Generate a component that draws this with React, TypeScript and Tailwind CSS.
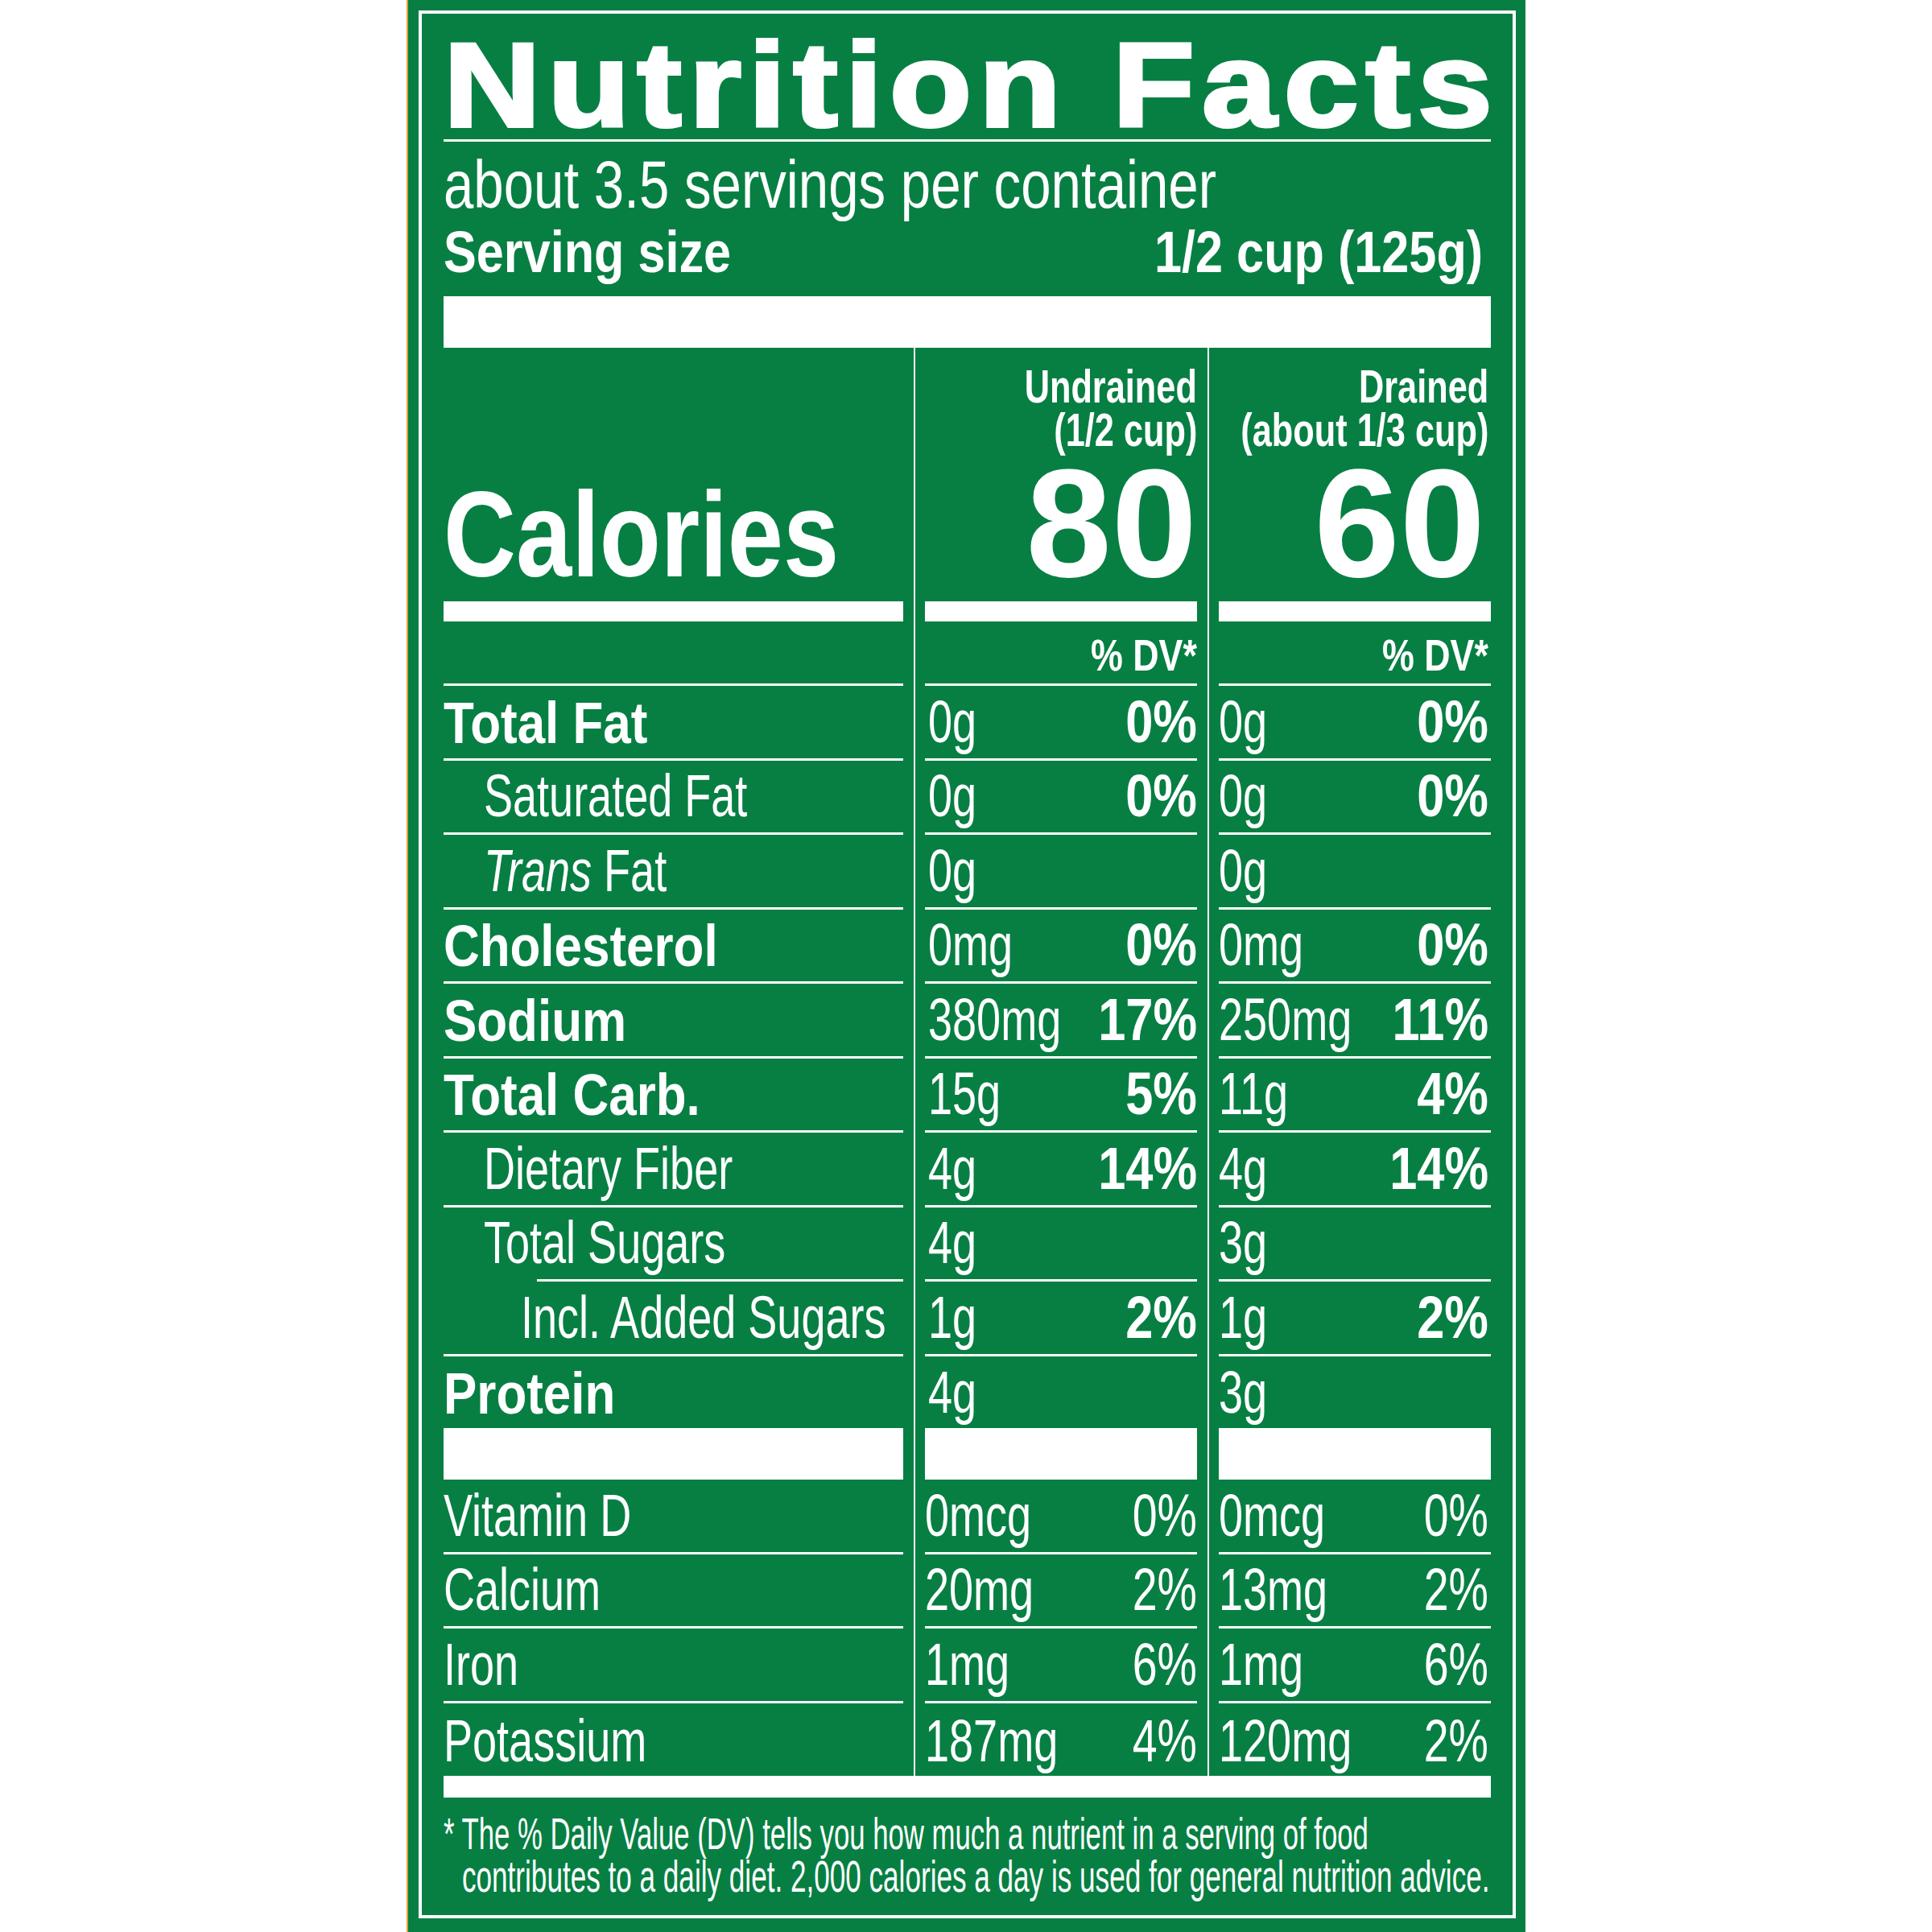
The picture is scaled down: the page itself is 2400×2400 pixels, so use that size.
import React from 'react';

/* ------------------------------------------------------------------ */
/*  Data                                                               */
/* ------------------------------------------------------------------ */

// Only Liberation Sans is around, so the condensed label face is faked with scale-x.
const SANS = "font-['Liberation_Sans',Arial,sans-serif]";

type Rule = 'full' | 'indent' | 'none';

type Row = {
  label: React.ReactNode;
  bold?: boolean;
  indent?: 0 | 1 | 2;
  u: string[];
  d: string[];
  rule: Rule;
  h: string;
  pb: string;
};

const NUTRIENTS: Row[] = [
  { label: 'Total Fat', bold: true, u: ['0g', '0%'], d: ['0g', '0%'], rule: 'full', h: 'h-[92.5px]', pb: 'pb-[8px]' },
  { label: 'Saturated Fat', indent: 1, u: ['0g', '0%'], d: ['0g', '0%'], rule: 'full', h: 'h-[92.5px]', pb: 'pb-[8px]' },
  {
    label: (
      <>
        <i>Trans</i> Fat
      </>
    ),
    indent: 1,
    u: ['0g'],
    d: ['0g'],
    rule: 'full',
    h: 'h-[92.5px]',
    pb: 'pb-[8px]',
  },
  { label: 'Cholesterol', bold: true, u: ['0mg', '0%'], d: ['0mg', '0%'], rule: 'full', h: 'h-[92.5px]', pb: 'pb-[8px]' },
  { label: 'Sodium', bold: true, u: ['380mg', '17%'], d: ['250mg', '11%'], rule: 'full', h: 'h-[92.5px]', pb: 'pb-[8px]' },
  { label: 'Total Carb.', bold: true, u: ['15g', '5%'], d: ['11g', '4%'], rule: 'full', h: 'h-[92.5px]', pb: 'pb-[8px]' },
  { label: 'Dietary Fiber', indent: 1, u: ['4g', '14%'], d: ['4g', '14%'], rule: 'full', h: 'h-[92.5px]', pb: 'pb-[8px]' },
  { label: 'Total Sugars', indent: 1, u: ['4g'], d: ['3g'], rule: 'indent', h: 'h-[92.5px]', pb: 'pb-[8px]' },
  { label: 'Incl. Added Sugars', indent: 2, u: ['1g', '2%'], d: ['1g', '2%'], rule: 'full', h: 'h-[92.5px]', pb: 'pb-[8px]' },
  { label: 'Protein', bold: true, u: ['4g'], d: ['3g'], rule: 'none', h: 'h-[89.5px]', pb: 'pb-[7px]' },
];

const VITAMINS: Row[] = [
  { label: 'Vitamin D', u: ['0mcg', '0%'], d: ['0mcg', '0%'], rule: 'full', h: 'h-[92.5px]', pb: 'pb-[8px]' },
  { label: 'Calcium', u: ['20mg', '2%'], d: ['13mg', '2%'], rule: 'full', h: 'h-[92.5px]', pb: 'pb-[8px]' },
  { label: 'Iron', u: ['1mg', '6%'], d: ['1mg', '6%'], rule: 'full', h: 'h-[92.5px]', pb: 'pb-[8px]' },
  { label: 'Potassium', u: ['187mg', '4%'], d: ['120mg', '2%'], rule: 'none', h: 'h-[90.5px]', pb: 'pb-[6px]' },
];

const INDENT = ['pl-0', 'pl-[50px]', 'pl-[96px]'];

const BOLD_TXT = 'text-[72px] leading-[72px] font-bold scale-x-[0.86]';
const REG_TXT = 'text-[74px] leading-[74px] scale-x-[0.73]';
const PCT_BOLD = 'text-[74px] leading-[74px] font-bold scale-x-[0.83]';
const PCT_REG = 'text-[74px] leading-[74px] scale-x-[0.75]';

/* ------------------------------------------------------------------ */
/*  Bits                                                               */
/* ------------------------------------------------------------------ */

// condensed text run: squeezed from its left or right edge
function T({
  children,
  right = false,
  className = '',
}: {
  children: React.ReactNode;
  right?: boolean;
  className?: string;
}) {
  return (
    <span className={`inline-block whitespace-nowrap ${right ? 'origin-right' : 'origin-left'} ${className}`}>
      {children}
    </span>
  );
}

function Cell({
  h,
  rule,
  pb,
  className = '',
  children,
}: {
  h: string;
  rule: Rule;
  pb: string;
  className?: string;
  children?: React.ReactNode;
}) {
  return (
    <div className={`${h} flex flex-col`}>
      <div className={`flex-1 flex items-end ${pb} ${className}`}>{children}</div>
      {rule === 'full' && <div className="h-[3px] bg-white" />}
      {rule === 'indent' && <div className="h-[3px] bg-white ml-[116px]" />}
    </div>
  );
}

function AmountPair({ amt, pct, pctClass }: { amt: string; pct?: string; pctClass: string }) {
  return (
    <>
      <div className="flex-1 min-w-0 flex items-end">
        <T className={REG_TXT}>{amt}</T>
      </div>
      <div className="flex-1 min-w-0 flex items-end justify-end">
        {pct && (
          <T right className={pctClass}>
            {pct}
          </T>
        )}
      </div>
    </>
  );
}

function LabelColumn() {
  return (
    <div className="w-[571px] flex flex-col">
      <div className="h-[315px] flex items-end pb-[8px]">
        <T className="text-[150px] leading-[150px] font-bold scale-x-[0.83]">Calories</T>
      </div>
      <div className="h-[25px] bg-white" />
      <Cell h="h-[80px]" rule="full" pb="pb-[7px]" />
      {NUTRIENTS.map((r, i) => (
        <Cell key={i} h={r.h} rule={r.rule} pb={r.pb} className={INDENT[r.indent ?? 0]}>
          <T className={r.bold ? BOLD_TXT : REG_TXT}>{r.label}</T>
        </Cell>
      ))}
      <div className="h-[64px] bg-white" />
      {VITAMINS.map((r, i) => (
        <Cell key={i} h={r.h} rule={r.rule} pb={r.pb}>
          <T className={REG_TXT}>{r.label}</T>
        </Cell>
      ))}
    </div>
  );
}

function ValueColumn({
  title,
  sub,
  calories,
  which,
  padR,
  numR,
  padL,
}: {
  title: string;
  sub: string;
  calories: string;
  which: 'u' | 'd';
  padR: string;
  numR: string;
  padL: string;
}) {
  return (
    <div className="w-[338px] flex flex-col">
      <div className="h-[315px] flex flex-col pt-[21px]">
        <div className={`flex flex-col items-end text-[57px] leading-[54px] font-bold ${padR}`}>
          <T right className="scale-x-[0.76]">
            {title}
          </T>
          <T right className="scale-x-[0.76]">
            {sub}
          </T>
        </div>
        <div className={`flex justify-end text-[191px] leading-[178px] font-bold ${numR}`}>{calories}</div>
      </div>
      <div className="h-[25px] bg-white" />
      <Cell h="h-[80px]" rule="full" pb="pb-[7px]" className={`justify-end ${padR}`}>
        <T right className="text-[56px] leading-[56px] font-bold scale-x-[0.8]">
          % DV*
        </T>
      </Cell>
      {NUTRIENTS.map((r, i) => {
        const [amt, pct] = r[which];
        return (
          <Cell key={i} h={r.h} rule={r.rule === 'indent' ? 'full' : r.rule} pb={r.pb} className={`${padL} ${padR}`}>
            <AmountPair amt={amt} pct={pct} pctClass={PCT_BOLD} />
          </Cell>
        );
      })}
      <div className="h-[64px] bg-white" />
      {VITAMINS.map((r, i) => {
        const [amt, pct] = r[which];
        return (
          <Cell key={i} h={r.h} rule={r.rule} pb={r.pb} className={padR}>
            <AmountPair amt={amt} pct={pct} pctClass={PCT_REG} />
          </Cell>
        );
      })}
    </div>
  );
}

function Divider() {
  return (
    <div className="w-[27px] flex justify-center">
      <div className="w-[2px] bg-white" />
    </div>
  );
}

/* ------------------------------------------------------------------ */
/*  Page                                                               */
/* ------------------------------------------------------------------ */

export default function App() {
  return (
    <div className="w-[2400px] h-[2400px] bg-white flex justify-center overflow-hidden">
      <div className="w-[1390px] h-[2400px] bg-[#077f43] border-l-2 border-[#e2a23a] pl-[13px] pr-[12px] pt-[13px] pb-[17px] text-white">
        <div className={`h-full border-4 border-white px-[27px] ${SANS}`}>
          <div className="h-[156px] pt-[22px] text-[149px] leading-[134px] whitespace-nowrap">
            <span className="inline-block origin-left scale-x-[1.12] font-bold tracking-[8px] [-webkit-text-stroke:4px_white]">
              Nutrition Facts
            </span>
          </div>
          <div className="h-[3px] bg-white" />
          <div className="h-[106px] text-[84px] leading-[106px]">
            <T className="scale-x-[0.8]">about 3.5 servings per container</T>
          </div>
          <div className="h-[62px] flex justify-between text-[72px] leading-[62px] font-bold pr-[10px]">
            <T className="scale-x-[0.85]">Serving size</T>
            <T right className="scale-x-[0.85]">
              1/2 cup (125g)
            </T>
          </div>
          <div className="mt-[24px] h-[64px] bg-white" />

          <div className="flex">
            <LabelColumn />
            <Divider />
            <ValueColumn title="Undrained" sub="(1/2 cup)" calories="80" which="u" padR="pr-0" numR="pr-0" padL="pl-[4px]" />
            <Divider />
            <ValueColumn title="Drained" sub="(about 1/3 cup)" calories="60" which="d" padR="pr-[3px]" numR="pr-[7px]" padL="pl-0" />
          </div>
          <div className="h-[27px] bg-white" />

          <div className="pt-[18px] text-[56px] leading-[53px]">
            <div>
              <T className="scale-x-[0.62]">* The % Daily Value (DV) tells you how much a nutrient in a serving of food</T>
            </div>
            <div className="pl-[23px]">
              <T className="scale-x-[0.627]">
                contributes to a daily diet. 2,000 calories a day is used for general nutrition advice.
              </T>
            </div>
          </div>
        </div>
      </div>
    </div>
  );
}
